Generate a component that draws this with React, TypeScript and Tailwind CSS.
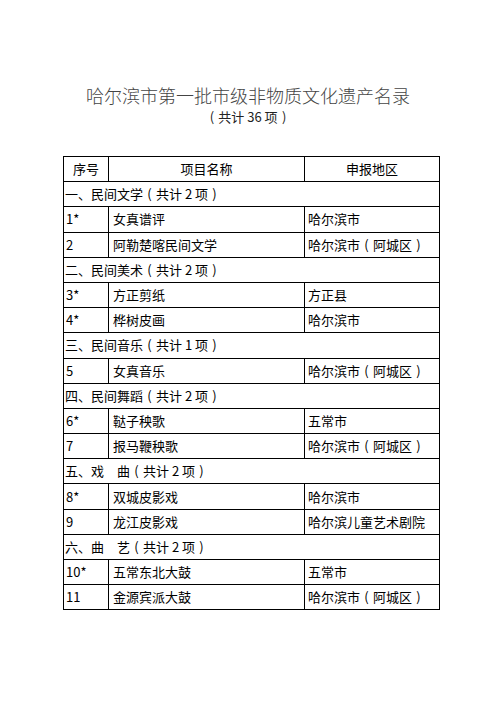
import React from "react";

type Row =
  | { kind: "section"; text: string }
  | { kind: "item"; no: string; name: string; area: string };

const rows: Row[] = [
  { kind: "section", text: "一、民间文学（共计 2 项）" },
  { kind: "item", no: "1*", name: "女真谱评", area: "哈尔滨市" },
  { kind: "item", no: "2", name: "阿勒楚喀民间文学", area: "哈尔滨市（阿城区）" },
  { kind: "section", text: "二、民间美术（共计 2 项）" },
  { kind: "item", no: "3*", name: "方正剪纸", area: "方正县" },
  { kind: "item", no: "4*", name: "桦树皮画", area: "哈尔滨市" },
  { kind: "section", text: "三、民间音乐（共计 1 项）" },
  { kind: "item", no: "5", name: "女真音乐", area: "哈尔滨市（阿城区）" },
  { kind: "section", text: "四、民间舞蹈（共计 2 项）" },
  { kind: "item", no: "6*", name: "鞑子秧歌", area: "五常市" },
  { kind: "item", no: "7", name: "报马鞭秧歌", area: "哈尔滨市（阿城区）" },
  { kind: "section", text: "五、戏　曲（共计 2 项）" },
  { kind: "item", no: "8*", name: "双城皮影戏", area: "哈尔滨市" },
  { kind: "item", no: "9", name: "龙江皮影戏", area: "哈尔滨儿童艺术剧院" },
  { kind: "section", text: "六、曲　艺（共计 2 项）" },
  { kind: "item", no: "10*", name: "五常东北大鼓", area: "五常市" },
  { kind: "item", no: "11", name: "金源宾派大鼓", area: "哈尔滨市（阿城区）" },
];

const font = {
  fontFamily: '"Noto Sans CJK SC", "Noto Sans", sans-serif',
};

function T({ text }: { text: string }) {
  const parts = text.split(/([（）])/);
  return (
    <>
      {parts.map((p, i) =>
        p === "（" ? (
          <span key={i} className="inline-block w-[1em] text-center">
            (
          </span>
        ) : p === "）" ? (
          <span key={i} className="inline-block w-[1em] text-center">
            )
          </span>
        ) : (
          <span key={i}>{p}</span>
        )
      )}
    </>
  );
}

export default function App() {
  return (
    <div className="w-[496px] h-[702px] bg-white text-black" style={font}>
      <div className="pt-[82px] flex flex-col items-center">
        <div className="text-[18px] leading-[26px] text-[#444] font-light">
          哈尔滨市第一批市级非物质文化遗产名录
        </div>
        <div className="text-[13px] leading-[18px] text-[#222]">
          <T text="（共计 36 项）" />
        </div>
      </div>
      <table className="ml-[63px] mt-[30px] w-[376px] border-collapse table-fixed text-[13px] leading-[18px]">
        <colgroup>
          <col className="w-[45px]" />
          <col className="w-[196px]" />
          <col className="w-[135px]" />
        </colgroup>
        <tbody>
          <tr className="h-[25.2px]">
            <td className="border border-black text-center p-0">序号</td>
            <td className="border border-black text-center p-0">项目名称</td>
            <td className="border border-black text-center p-0">申报地区</td>
          </tr>
          {rows.map((r, i) =>
            r.kind === "section" ? (
              <tr key={i} className="h-[25.2px]">
                <td colSpan={3} className="border border-black p-0 pl-[1px] whitespace-pre">
                  <T text={r.text} />
                </td>
              </tr>
            ) : (
              <tr key={i} className="h-[25.2px]">
                <td className="border border-black p-0 pl-[2px]">{r.no}</td>
                <td className="border border-black p-0 pl-[4px]">{r.name}</td>
                <td className="border border-black p-0 pl-[3px]">
                  <T text={r.area} />
                </td>
              </tr>
            )
          )}
        </tbody>
      </table>
    </div>
  );
}
